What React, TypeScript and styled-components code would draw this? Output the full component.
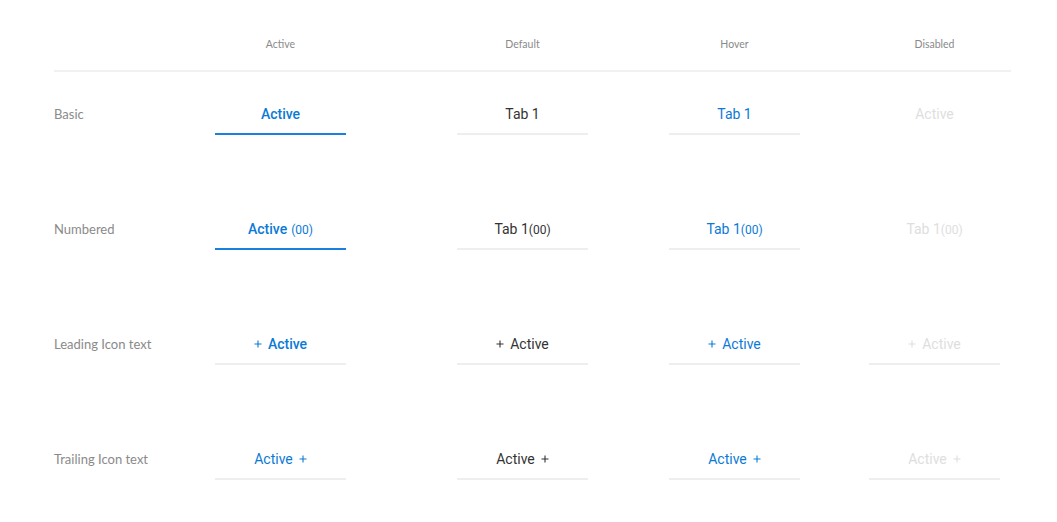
import React from "react";
import styled, { createGlobalStyle } from "styled-components";

const GlobalStyle = createGlobalStyle`
  body {
    margin: 0;
    background: #fff;
  }
`;

const BLUE = "#0b7ad6";

type Variant = "active" | "default" | "hover" | "disabled";

const Page = styled.div`
  padding: 0 46px 0 54px;
`;

const Grid = styled.div`
  display: grid;
  grid-template-columns: 161px 242px 212px 200px 131px;
`;

const HeaderRow = styled(Grid)`
  padding-top: 37px;
  padding-bottom: 19px;
  border-bottom: 2px solid #f1f1f1;
`;

const HeaderCell = styled.div`
  width: 131px;
  text-align: center;
  font-family: Lato, "Open Sans", sans-serif;
  font-size: 10.5px;
  line-height: 14px;
  color: #8a8a8a;
`;

const Body = styled(Grid)`
  padding-top: 32px;
  row-gap: 84px;
`;

const RowLabel = styled.div`
  font-family: Lato, "Open Sans", sans-serif;
  font-size: 13px;
  font-weight: 400;
  line-height: 20px;
  color: #8a8a8a;
`;

const colors: Record<Variant, string> = {
  active: BLUE,
  default: "#333333",
  hover: BLUE,
  disabled: "#dedede",
};

const Tab = styled.div<{ $variant: Variant; $bold?: boolean; $line?: "blue" | "gray" | "none" }>`
  width: 131px;
  height: 20px;
  display: flex;
  align-items: center;
  justify-content: center;
  gap: 6px;
  font-family: Roboto, "Liberation Sans", sans-serif;
  font-size: 14px;
  line-height: 20px;
  font-weight: ${(p) => (p.$bold ? 500 : 400)};
  color: ${(p) => colors[p.$variant]};
  padding-bottom: 9px;
  border-bottom: 2px solid
    ${(p) => (p.$line === "blue" ? "#1a80e0" : p.$line === "none" ? "transparent" : "#eeeeee")};
`;

const Count = styled.span<{ $space?: boolean }>`
  font-size: 12px;
  font-weight: 400;
  line-height: 1;
  margin-left: ${(p) => (p.$space ? "4px" : "0")};
`;

const Label = styled.span``;

const Plus = () => (
  <svg width="8" height="8" viewBox="0 0 8 8" fill="none">
    <path d="M4 0.5V7.5M0.5 4H7.5" stroke="currentColor" strokeWidth="1.1" />
  </svg>
);

const variants: Variant[] = ["active", "default", "hover", "disabled"];

const topLine = (v: Variant) => (v === "active" ? "blue" : v === "disabled" ? "none" : "gray");

export default function App() {
  return (
    <Page>
      <GlobalStyle />
      <HeaderRow>
        <div />
        <HeaderCell>Active</HeaderCell>
        <HeaderCell>Default</HeaderCell>
        <HeaderCell>Hover</HeaderCell>
        <HeaderCell>Disabled</HeaderCell>
      </HeaderRow>
      <Body>
        <RowLabel>Basic</RowLabel>
        {variants.map((v) => (
          <div key={v}>
            <Tab $variant={v} $bold={v === "active"} $line={topLine(v)}>
              {v === "active" || v === "disabled" ? "Active" : "Tab 1"}
            </Tab>
          </div>
        ))}

        <RowLabel>Numbered</RowLabel>
        {variants.map((v) => (
          <div key={v}>
            <Tab $variant={v} $bold={v === "active"} $line={topLine(v)}>
              <Label>
                {v === "active" ? "Active" : "Tab 1"}
                <Count $space={v === "active"}>(00)</Count>
              </Label>
            </Tab>
          </div>
        ))}

        <RowLabel>Leading Icon text</RowLabel>
        {variants.map((v) => (
          <div key={v}>
            <Tab $variant={v} $bold={v === "active"} $line="gray">
              <Plus />
              <Label>Active</Label>
            </Tab>
          </div>
        ))}

        <RowLabel>Trailing Icon text</RowLabel>
        {variants.map((v) => (
          <div key={v}>
            <Tab $variant={v} $line="gray">
              <Label>Active</Label>
              <Plus />
            </Tab>
          </div>
        ))}
      </Body>
    </Page>
  );
}
